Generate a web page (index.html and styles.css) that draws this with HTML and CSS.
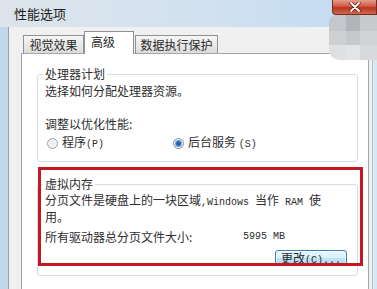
FILE: index.html
```html
<!DOCTYPE html>
<html lang="zh-CN">
<head>
<meta charset="utf-8">
<title>性能选项</title>
<link rel="stylesheet" href="styles.css">
</head>
<body>
<div class="win">
  <div class="titlebar"><span class="title">性能选项</span></div>
  <div class="client">
    <div class="tabs">
      <div class="tab t1">视觉效果</div>
      <div class="tab sel">高级</div>
      <div class="tab t3">数据执行保护</div>
    </div>
    <div class="panel">
      <fieldset class="group g1">
        <legend>处理器计划</legend>
        <p class="l1">选择如何分配处理器资源。</p>
        <p class="l2">调整以优化性能:</p>
        <div class="radios">
          <span class="radio"><span class="dot"></span><span>程序<span class="lat">(P)</span></span></span>
          <span class="radio"><span class="dot on"></span><span>后台服务 <span class="lat">(S)</span></span></span>
        </div>
      </fieldset>
      <fieldset class="group g2">
        <legend>虚拟内存</legend>
        <p class="desc">分页文件是硬盘上的一块区域<span class="lat">,Windows </span>当作<span class="lat"> RAM </span>使<br>用。</p>
        <div class="total"><span>所有驱动器总分页文件大小:</span><span class="lat">5995 MB</span></div>
        <div class="btnrow"><button class="btn">更改<span class="lat">(C)...</span></button></div>
      </fieldset>
    </div>
  </div>
  <div class="close"><svg width="14" height="10" viewBox="0 0 14 10"><path d="M3 1 L11 9 M11 1 L3 9" stroke="#5a1a12" stroke-width="3.2" stroke-linecap="round"/><path d="M3 1 L11 9 M11 1 L3 9" stroke="#ffffff" stroke-width="1.8" stroke-linecap="round"/></svg></div>
  <div class="mosaic">
    <span class="m a"></span><span class="m b"></span><span class="m c"></span>
    <span class="m d"></span><span class="m e"></span><span class="m f"></span>
    <span class="m g"></span><span class="m h"></span><span class="m i"></span>
  </div>
  <div class="mark"></div>
</div>
</body>
</html>
```
FILE: styles.css
```css
html, body {
  margin: 0;
  padding: 0;
}
body {
  width: 377px;
  height: 289px;
  overflow: hidden;
  font-family: "Noto Sans CJK SC", "Noto Sans", sans-serif;
  font-size: 12px;
  line-height: 14px;
  color: #2e2e2e;
}
.lat {
  font-family: "Liberation Mono", monospace;
  font-size: 10px;
}
.win {
  position: relative;
  width: 377px;
  height: 289px;
  display: flex;
  flex-direction: column;
  background: linear-gradient(to right, #c3d6ea, #cfe0f1 40%, #d9e7f4);
}
.titlebar {
  flex: none;
  height: 27px;
  display: flex;
  align-items: center;
  padding-left: 14px;
  background: linear-gradient(to right, #dde4eb, #d4e2ef 45%, #c2dbf3);
}
.title {
  font-size: 13px;
  color: #1d1d1d;
}
.client {
  flex: 1;
  display: flex;
  flex-direction: column;
  margin: 0 4px 0 8px;
  padding-top: 4px;
  border-left: 1px solid #8ea2b6;
  border-right: 1px solid #b4c0cc;
  background: #f0f0f0;
}
.tabs {
  display: flex;
  align-items: flex-end;
  margin-left: 14px;
}
.tab {
  box-sizing: border-box;
  height: 18px;
  line-height: 17px;
  border: 1px solid #8e9196;
  border-bottom: none;
  background: linear-gradient(#f6f6f6, #dcdcdc);
  text-align: center;
  color: #2a2a2a;
}
.t1 { width: 61px; }
.t3 { width: 83px; margin-left: 1px; }
.tab.sel {
  position: relative;
  z-index: 1;
  width: 50px;
  height: 23px;
  margin-bottom: -1px;
  line-height: 19px;
  background: #ffffff;
  text-align: left;
  padding-left: 6px;
}
.panel {
  flex: 1;
  margin: 0 3px 0 12px;
  padding: 13px 10px 0 15px;
  border: 1px solid #a2a5aa;
  border-bottom: none;
  background: #ffffff;
}
.group {
  margin: 0;
  padding: 0 10px 9px 7px;
  border: 1px solid #d5dde3;
  border-radius: 3px;
  min-width: 0;
}
.group legend {
  padding: 0 2px;
  margin-left: -2px;
  line-height: 14px;
}
.group p {
  margin: 0;
  white-space: nowrap;
}
.l1 { margin-top: 3px !important; }
.l2 { margin-top: 19px !important; }
.radios {
  display: grid;
  grid-template-columns: 126px auto;
  margin-top: 4px;
  padding-left: 2px;
}
.radio {
  display: flex;
  align-items: center;
  gap: 4px;
}
.dot {
  box-sizing: border-box;
  width: 11px;
  height: 11px;
  border-radius: 50%;
  border: 1px solid #9a9fa5;
  background: radial-gradient(circle at 50% 50%, #e8eaec 0, #f4f5f6 60%, #dfe2e5 100%);
}
.dot.on {
  border-color: #7f93a8;
  background: radial-gradient(circle at 50% 50%, #1f5ea8 0, #2a6cb8 2px, #8fb6de 3.3px, #eef2f6 4px);
}
.g2 {
  margin-top: 15px;
}
.group p.desc {
  margin-top: 2px;
}
.total {
  display: grid;
  grid-template-columns: 198px auto;
  margin-top: 6px;
  white-space: nowrap;
}
.btnrow {
  display: flex;
  justify-content: flex-end;
  margin-top: 6px;
}
.btn {
  box-sizing: border-box;
  width: 72px;
  height: 16px;
  padding: 0;
  border: 1px solid #3c7fb1;
  border-radius: 3px;
  background: linear-gradient(#eaf6fd, #d9f0fc 50%, #bee6fd 51%, #a7d9f5);
  box-shadow: inset 0 0 0 1px rgba(255,255,255,0.6);
  font-family: "Noto Sans CJK SC", sans-serif;
  font-size: 12px;
  line-height: 14px;
  color: #2a2a2a;
}
.close {
  position: absolute;
  top: 0;
  right: 0;
  width: 45px;
  height: 15px;
  box-sizing: border-box;
  border: 1px solid #7a2b20;
  border-top: none;
  border-radius: 0 0 0 4px;
  background: linear-gradient(#e59b8d, #d05a45 45%, #b9331f 55%, #cf6a4f);
  display: flex;
  align-items: center;
  justify-content: center;
}
.mosaic {
  position: absolute;
  left: 329px;
  top: 15px;
  width: 48px;
  height: 45px;
  display: grid;
  grid-template-columns: 17px 14px 17px;
  grid-template-rows: 16px 14px 15px;
  border-radius: 8px 0 0 10px;
  overflow: hidden;
}
.m.a { background: #c4c7cb; }
.m.b { background: #b1b4b8; }
.m.c { background: #c7c9cc; }
.m.d { background: #cdcfd1; }
.m.e { background: #c6c8ca; }
.m.f { background: #d2d3d5; }
.m.g { background: #dfe0e1; }
.m.h { background: #e3e4e5; }
.m.i { background: #d8d9da; }
.mark {
  position: absolute;
  left: 38px;
  top: 167px;
  width: 325px;
  height: 99px;
  box-sizing: border-box;
  border: 3px solid #c41820;
}
```
